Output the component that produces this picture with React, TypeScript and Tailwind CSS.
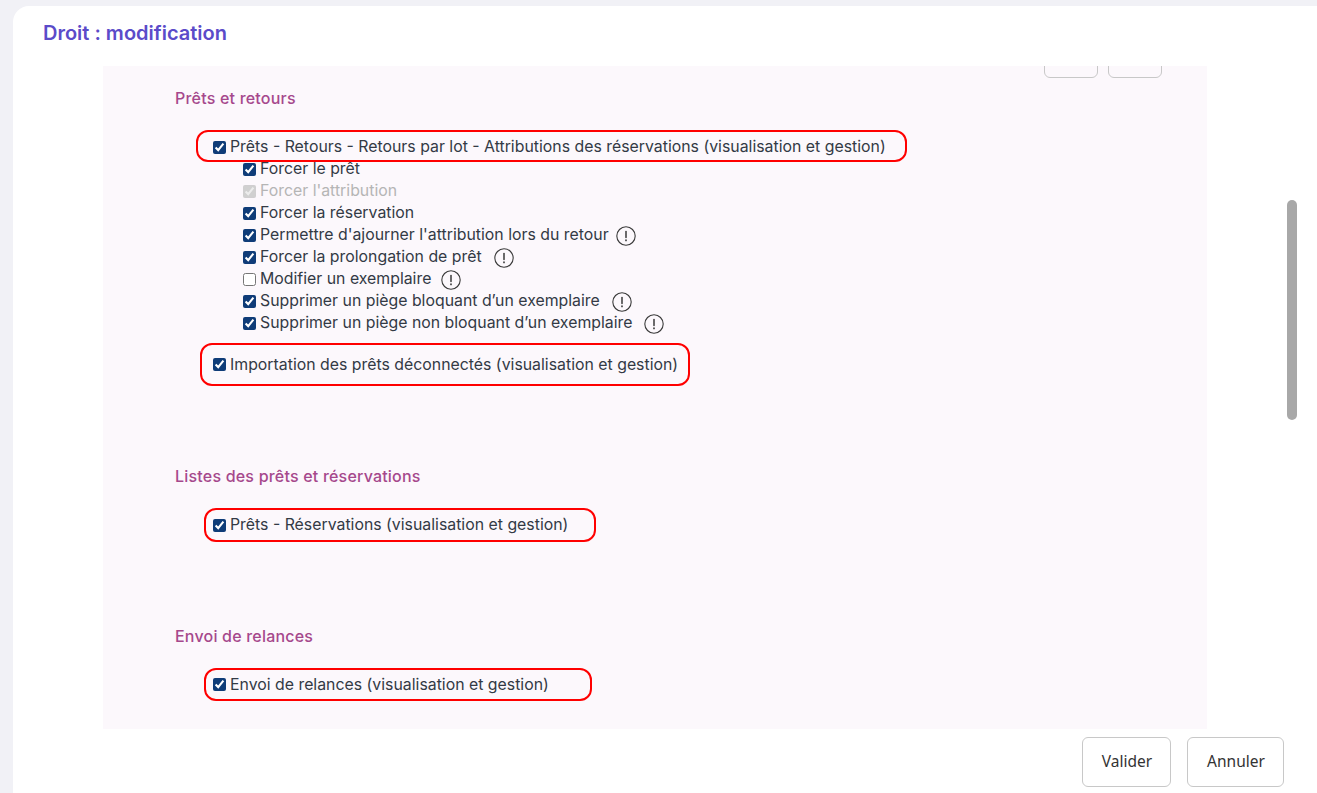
import type { FC } from 'react'

const Info: FC<{ gap: string }> = ({ gap }) => (
  <svg viewBox="0 0 20 20" className={`w-5 h-5 shrink-0 mt-[2px] ${gap}`} fill="none" stroke="#3a3a3a">
    <circle cx="10" cy="10" r="9.2" strokeWidth="1.1" />
    <path d="M10 5.5v6" strokeWidth="1.5" strokeLinecap="round" />
    <path d="M10 14.2v.3" strokeWidth="1.7" strokeLinecap="round" />
  </svg>
)

const Check: FC<{ checked?: boolean; disabled?: boolean }> = ({ checked = true, disabled = false }) => (
  <input
    type="checkbox"
    checked={checked}
    disabled={disabled}
    readOnly
    className="w-[13px] h-[13px] shrink-0 accent-[#0f3c78]"
  />
)

const subRows = [
  { label: 'Forcer le prêt' },
  { label: "Forcer l'attribution", disabled: true },
  { label: 'Forcer la réservation' },
  { label: "Permettre d'ajourner l'attribution lors du retour", info: 'ml-[3px]' },
  { label: 'Forcer la prolongation de prêt', info: 'ml-[8px]' },
  { label: 'Modifier un exemplaire', info: 'ml-[6px]', unchecked: true },
  { label: 'Supprimer un piège bloquant d’un exemplaire', info: 'ml-[8px]' },
  { label: 'Supprimer un piège non bloquant d’un exemplaire', info: 'ml-[8px]' },
]

const Heading: FC<{ children: string }> = ({ children }) => (
  <h2 className="text-[16px] leading-5 font-medium tracking-[0.2px] text-[#a6488c]">{children}</h2>
)

const App: FC = () => {
  return (
    <div className="relative w-[1317px] h-[793px] overflow-hidden bg-[#f1f1f6] pt-[6px] pl-[13px] font-['Inter','Liberation_Sans',sans-serif] text-[#333a45]">
      <div className="flex flex-col h-full bg-white rounded-tl-2xl">
        {/* titre */}
        <div className="h-[60px] shrink-0 pl-[30px] pt-[15px]">
          <h1 className="text-[20px] leading-6 font-semibold text-[#5b4bc9]">Droit : modification</h1>
        </div>

        {/* zone des droits */}
        <div className="ml-[90px] w-[1104px] h-[663px] shrink-0 overflow-hidden bg-[#fcf8fc] text-[15.85px] leading-[22px]">
          <div className="flex justify-end gap-[10px] pr-[45px] h-[12px] items-end">
            <div className="w-[54px] h-10 shrink-0 rounded-md border border-[#c8c8c8]" />
            <div className="w-[54px] h-10 shrink-0 rounded-md border border-[#c8c8c8]" />
          </div>

          <div className="pl-[72px] pt-[10px]">
            <Heading>Prêts et retours</Heading>
            <div className="mt-[22px] ml-[21px] w-[711px] h-8 flex items-center gap-[4px] pl-[15px] pt-[2px] border-2 border-[#ff0000] rounded-xl">
              <Check />
              <span>Prêts - Retours - Retours par lot - Attributions des réservations (visualisation et gestion)</span>
            </div>
            <div className="-mt-1 ml-[68px] flex flex-col">
              {subRows.map((row) => (
                <div key={row.label} className="h-[22px] flex items-center gap-[4px]">
                  <Check checked={!row.unchecked} disabled={row.disabled} />
                  <span className={row.disabled ? 'text-[#b5b5b5]' : ''}>{row.label}</span>
                  {row.info && <Info gap={row.info} />}
                </div>
              ))}
            </div>
            <div className="mt-[9px] ml-[25px] w-[490px] h-[43px] flex items-center gap-[4px] pl-[11px] border-2 border-[#ff0000] rounded-xl">
              <Check />
              <span>Importation des prêts déconnectés (visualisation et gestion)</span>
            </div>
          </div>

          <div className="pl-[72px] pt-[80px]">
            <Heading>Listes des prêts et réservations</Heading>
            <div className="mt-[22px] ml-[29px] w-[392px] h-[34px] flex items-center gap-[4px] pl-[7px] border-2 border-[#ff0000] rounded-xl">
              <Check />
              <span>Prêts - Réservations (visualisation et gestion)</span>
            </div>
          </div>

          <div className="pl-[72px] pt-[84px]">
            <Heading>Envoi de relances</Heading>
            <div className="mt-[22px] ml-[29px] w-[388px] h-[33px] flex items-center gap-[4px] pl-[7px] border-2 border-[#ff0000] rounded-xl">
              <Check />
              <span>Envoi de relances (visualisation et gestion)</span>
            </div>
          </div>
        </div>

        {/* boutons */}
        <div className="flex justify-end gap-4 pr-[33px] pt-2 font-['Noto_Sans','Liberation_Sans',sans-serif] text-[15.5px] text-[#333]">
          <button className="w-[89px] h-[50px] pl-[1px] rounded-md border border-[#c8c8c8] bg-white">Valider</button>
          <button className="w-[97px] h-[50px] pl-[1px] rounded-md border border-[#c8c8c8] bg-white">Annuler</button>
        </div>
      </div>

      {/* ascenseur */}
      <div className="absolute left-[1287px] top-[200px] w-[10px] h-[220px] rounded-full bg-[#a8a8a8]" />
    </div>
  )
}

export default App
